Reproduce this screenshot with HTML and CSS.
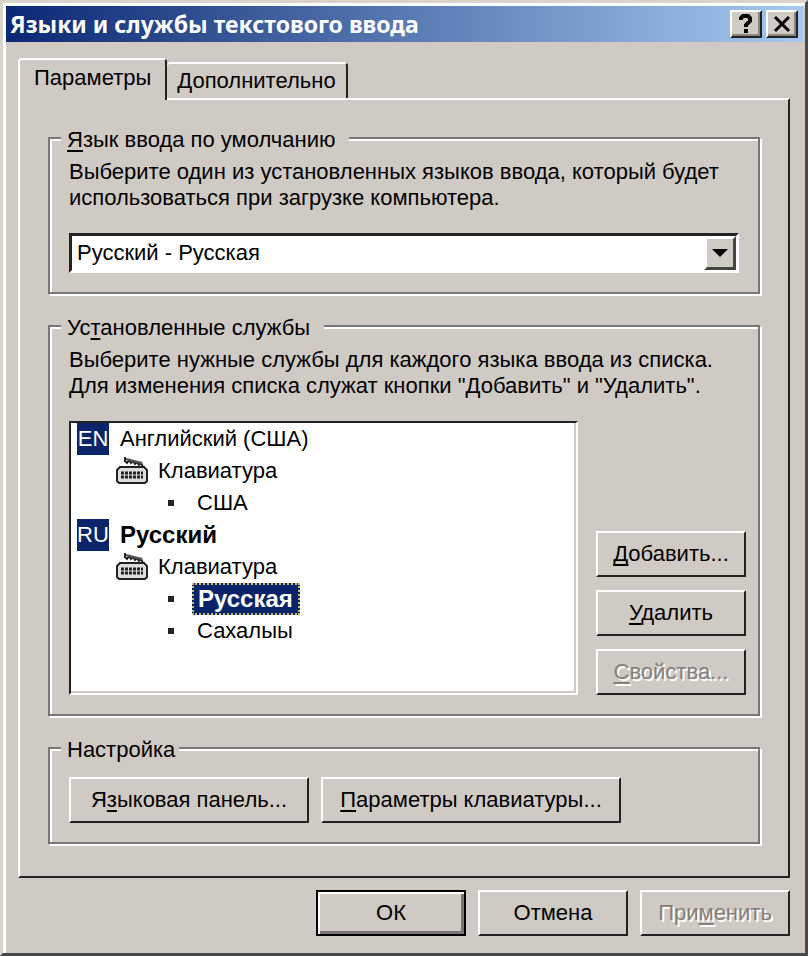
FILE: index.html
```html
<!DOCTYPE html>
<html lang="ru">
<head>
    <meta charset="UTF-8">
    <meta name="viewport" content="width=device-width, initial-scale=1.0">
    <title>Языки и службы текстового ввода</title>
    <link rel="stylesheet" href="styles.css">
</head>
<body>

<div class="window">
    <!-- Заголовок окна -->
    <div class="titlebar">
        <h1>Языки и службы текстового ввода</h1>
        <button type="button" class="caption-btn" aria-label="Справка">
            <svg width="16" height="20" viewBox="0 0 16 20"><path d="M3 6V4L5 2H10L12 4V7L8 11V13" fill="none" stroke="#000" stroke-width="4"/><path d="M6 15h4v4H6z"/></svg>
        </button>
        <button type="button" class="caption-btn" aria-label="Закрыть">
            <svg width="18" height="18" viewBox="0 0 18 18"><path d="M2 2L16 16M16 2L2 16" fill="none" stroke="#000" stroke-width="3"/></svg>
        </button>
    </div>

    <div class="content">
        <div class="tabs" role="tablist">
            <button type="button" class="tab active" role="tab" aria-selected="true">Параметры</button>
            <button type="button" class="tab" role="tab" aria-selected="false">Дополнительно</button>
        </div>

        <div class="panel">
            <!-- Язык по умолчанию -->
            <fieldset class="group">
                <legend><label for="language"><u>Я</u>зык ввода по умолчанию</label></legend>
                <p>Выберите один из установленных языков ввода, который будет использоваться при загрузке компьютера.</p>
                <div class="combo">
                    <select id="language">
                        <option>Русский - Русская</option>
                    </select>
                    <span class="combo-arrow"><svg width="16" height="8" viewBox="0 0 16 8"><path d="M0 0H16L8 8Z"/></svg></span>
                </div>
            </fieldset>

            <!-- Список служб -->
            <fieldset class="group services">
                <legend>Ус<u>т</u>ановленные службы</legend>
                <p>Выберите нужные службы для каждого языка ввода из списка. Для изменения списка служат кнопки "Добавить" и "Удалить".</p>
                <div class="services-row">
                    <ul class="tree">
                        <li class="lang"><span class="code">EN</span>Английский (США)</li>
                        <li class="device">
                            <svg width="32" height="28" viewBox="0 0 32 28"><path d="M9 0V4L11 6L13 3L15 6L17 4L19 7L21 5L23 8L25 6L27 10" fill="none" stroke="#222" stroke-width="2"/><path d="M10 2L26 6" stroke="#555" stroke-width="2"/><path d="M4 10H28L31 13V24L29 26H3L1 24V13Z" fill="#ddd" stroke="#222" stroke-width="2"/><path d="M5 16H27M5 20H27" stroke="#222" stroke-width="3" stroke-dasharray="3 1"/></svg>
                            Клавиатура
                        </li>
                        <li class="layout">США</li>
                        <li class="lang current"><span class="code">RU</span>Русский</li>
                        <li class="device">
                            <svg width="32" height="28" viewBox="0 0 32 28"><path d="M9 0V4L11 6L13 3L15 6L17 4L19 7L21 5L23 8L25 6L27 10" fill="none" stroke="#222" stroke-width="2"/><path d="M10 2L26 6" stroke="#555" stroke-width="2"/><path d="M4 10H28L31 13V24L29 26H3L1 24V13Z" fill="#ddd" stroke="#222" stroke-width="2"/><path d="M5 16H27M5 20H27" stroke="#222" stroke-width="3" stroke-dasharray="3 1"/></svg>
                            Клавиатура
                        </li>
                        <li class="layout"><span class="selected">Русская</span></li>
                        <li class="layout">Сахалыы</li>
                    </ul>
                    <div class="side-buttons">
                        <button type="button" class="btn"><u>Д</u>обавить...</button>
                        <button type="button" class="btn"><u>У</u>далить</button>
                        <button type="button" class="btn" disabled><u>С</u>войства...</button>
                    </div>
                </div>
            </fieldset>

            <!-- Настройка -->
            <fieldset class="group settings">
                <legend>Настройка</legend>
                <div class="settings-row">
                    <button type="button" class="btn wide">Я<u>з</u>ыковая панель...</button>
                    <button type="button" class="btn wider"><u>П</u>араметры клавиатуры...</button>
                </div>
            </fieldset>
        </div>

        <div class="actions">
            <button type="button" class="btn default">ОК</button>
            <button type="button" class="btn">Отмена</button>
            <button type="button" class="btn" disabled>При<u>м</u>енить</button>
        </div>
    </div>
</div>

</body>
</html>
```
FILE: styles.css
```css
* {
    box-sizing: border-box;
}
body {
    margin: 0;
    background-color: #cfcac3;
    color: #000;
    font-family: "Liberation Sans", Arial, sans-serif;
    font-size: 22px;
    line-height: 26px;
}
button, select {
    font: inherit;
    color: inherit;
    margin: 0;
}
u {
    text-underline-offset: 3px;
    text-decoration-thickness: 2px;
    text-decoration-skip-ink: none;
}
.window {
    min-height: 100vh;
    background-color: #cfcac3;
    border: 3px solid;
    border-color: #d8d4cc #4a4a4a #4a4a4a #d8d4cc;
    box-shadow: inset 3px 3px #fff;
    padding: 3px 2px 14px 3px;
}
.titlebar {
    display: flex;
    align-items: center;
    gap: 4px;
    height: 36px;
    padding: 0 5px 0 4px;
    color: #fff;
    background: linear-gradient(to right, #0a2873, #a6caf0);
}
.titlebar h1 {
    flex: 1;
    margin: 0;
    font-family: "Noto Sans", "Open Sans", sans-serif;
    font-size: 23px;
    font-weight: bold;
}
.caption-btn {
    display: flex;
    align-items: center;
    justify-content: center;
    width: 32px;
    height: 28px;
    padding: 0;
    background-color: #cfcac3;
    border: 2px solid;
    border-color: #fff #222 #222 #fff;
    box-shadow: inset -2px -2px #8a8680;
}
.content {
    padding: 16px 13px 0 12px;
}
.tabs {
    display: flex;
    align-items: flex-end;
}
.tab {
    position: relative;
    height: 36px;
    padding: 0 10px;
    background-color: #cfcac3;
    border: solid;
    border-width: 2px 2px 0 0;
    border-color: #fff #222 #fff #fff;
    border-radius: 4px 4px 0 0;
}
.tab.active {
    height: 42px;
    margin-bottom: -2px;
    padding: 0 14px 4px;
    border-left-width: 2px;
    z-index: 1;
}
.panel {
    padding: 24px 28px 32px;
    border: 2px solid;
    border-color: #fff #222 #222 #fff;
}
.group {
    min-width: 0;
    margin: 0 0 18px;
    padding: 7px 19px 19px;
    border: 2px solid #777;
    box-shadow: 2px 2px #fff, inset 2px 2px #fff;
}
.group legend {
    margin-left: -8px;
    padding: 4px 14px 0 6px;
    background-color: #cfcac3;
    line-height: 24px;
}
.group p {
    margin: 0 0 22px;
}
.combo {
    position: relative;
    border: 3px solid;
    border-color: #222 #fff #fff #222;
}
.combo select {
    display: block;
    width: 100%;
    height: 34px;
    padding: 0 40px 0 5px;
    background-color: #fff;
    border: 0;
    border-radius: 0;
    appearance: none;
}
.combo-arrow {
    position: absolute;
    top: 0;
    right: 0;
    bottom: 0;
    display: flex;
    align-items: center;
    justify-content: center;
    width: 32px;
    background-color: #cfcac3;
    border: 3px solid;
    border-color: #fff #444 #444 #fff;
    pointer-events: none;
}
.group.services {
    padding-right: 12px;
}
.services-row {
    display: flex;
    gap: 18px;
}
.tree {
    flex: 1;
    min-height: 274px;
    margin: 0;
    padding: 0 6px;
    list-style: none;
    background-color: #fff;
    border: 2px solid;
    border-color: #222 #fff #fff #222;
    box-shadow: inset -2px -2px #cfcac3;
}
.tree li {
    display: flex;
    align-items: center;
    height: 32px;
}
.lang .code {
    width: 32px;
    margin-right: 11px;
    font-size: 22px;
    line-height: 32px;
    text-align: center;
    font-weight: normal;
    color: #fff;
    background-color: #0a246a;
}
.tree .current {
    font-size: 24px;
    font-weight: bold;
}
.tree .device {
    gap: 10px;
    padding-left: 39px;
}
.tree .layout {
    padding-left: 91px;
}
.layout::before {
    content: "";
    width: 6px;
    height: 6px;
    margin-right: 23px;
    background-color: #222;
}
.selected {
    margin-left: -5px;
    padding: 0 5px 0 4px;
    font-size: 24px;
    line-height: 28px;
    font-weight: bold;
    color: #fff;
    background-color: #0a246a;
    border: 2px dotted #c8c070;
}
.side-buttons {
    display: flex;
    flex-direction: column;
    justify-content: flex-end;
    gap: 13px;
}
.btn {
    width: 150px;
    height: 46px;
    padding: 0;
    background-color: #cfcac3;
    border: 2px solid;
    border-color: #fff #222 #222 #fff;
}
.btn:disabled {
    color: #85817b;
    text-shadow: 2px 2px #fff;
}
.btn.wide {
    width: 240px;
}
.btn.wider {
    width: 300px;
}
.btn.default {
    border-color: #000;
    box-shadow: inset 2px 2px #fff, inset -3px -3px #77747a;
}
.group.settings {
    margin-bottom: 0;
    padding-top: 15px;
}
.group.settings legend {
    padding-right: 4px;
}
.settings-row {
    display: flex;
    flex-wrap: wrap;
    gap: 12px;
}
.actions {
    display: flex;
    justify-content: flex-end;
    gap: 12px;
    margin-top: 12px;
}
```
